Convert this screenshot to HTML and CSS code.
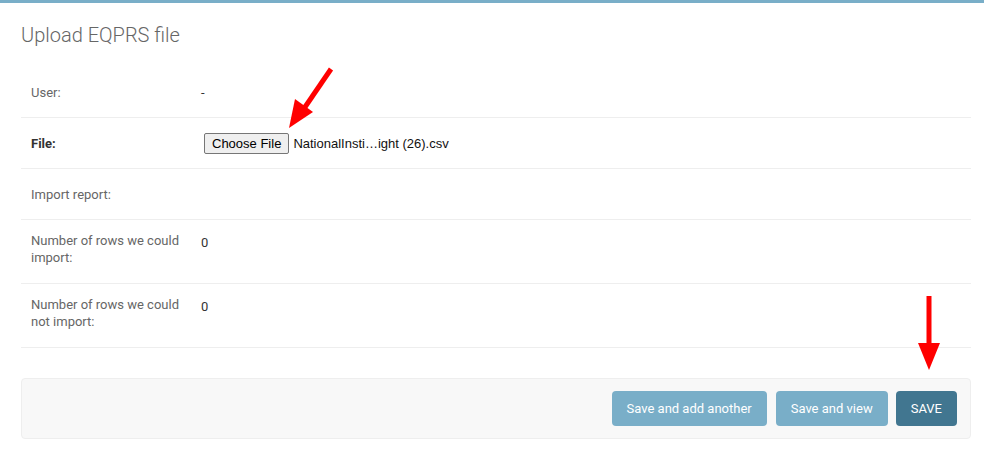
FILE: index.html
```html
<!DOCTYPE html>
<html>
<head>
<meta charset="utf-8">
<link rel="stylesheet" href="styles.css">
</head>
<body>
<div class="topbar"></div>
<div class="content">
  <h1 class="title">Upload EQPRS file</h1>
  <div class="fieldset">
    <div class="form-row">
      <div class="label">User:</div>
      <div class="value">-</div>
    </div>
    <div class="form-row">
      <div class="label label-strong">File:</div>
      <div class="value file-value">
        <span class="file-btn">Choose File</span>
        <span class="file-name">NationalInsti…ight (26).csv</span>
      </div>
    </div>
    <div class="form-row">
      <div class="label">Import report:</div>
      <div class="value"></div>
    </div>
    <div class="form-row form-row-tall">
      <div class="label">Number of rows we could import:</div>
      <div class="value">0</div>
    </div>
    <div class="form-row form-row-tall">
      <div class="label">Number of rows we could not import:</div>
      <div class="value">0</div>
    </div>
  </div>
  <div class="submit-row">
    <span class="btn btn-wide">Save and add another</span>
    <span class="btn">Save and view</span>
    <span class="btn btn-default">SAVE</span>
  </div>
</div>
<svg class="arrows" width="984" height="454" viewBox="0 0 984 454">
  <line x1="331" y1="69" x2="303" y2="110" stroke="#ff0000" stroke-width="5"/>
  <polygon points="289,128 295,99 313,112" fill="#ff0000"/>
  <line x1="929" y1="296" x2="929" y2="346" stroke="#ff0000" stroke-width="5"/>
  <polygon points="918,343 940,343 929,370" fill="#ff0000"/>
</svg>
</body>
</html>
```
FILE: styles.css
```css
html, body {
  margin: 0;
  padding: 0;
  background: #fff;
}
body {
  position: relative;
  font-family: Roboto, "Liberation Sans", sans-serif;
  font-size: 13px;
  color: #333;
  width: 984px;
  height: 454px;
  overflow: hidden;
}
.topbar {
  height: 3px;
  background: #79aec8;
}
.content {
  padding: 0 13px 0 21px;
}
.title {
  margin: 20px 0 20px 0;
  font-size: 20px;
  line-height: 24px;
  font-weight: 300;
  color: #666;
}
.fieldset {
  display: flex;
  flex-direction: column;
}
.form-row {
  display: flex;
  padding: 10px;
  height: 30px;
  border-bottom: 1px solid #eee;
}
.form-row-tall {
  height: 43px;
}
.label {
  width: 160px;
  flex-shrink: 0;
  padding: 7px 10px 0 0;
  line-height: 17px;
  color: #666;
}
.form-row-tall .label {
  padding-top: 2px;
}
.label-strong {
  font-weight: 700;
  color: #333;
}
.value {
  padding-top: 7px;
  line-height: 17px;
  color: #333;
}
.form-row-tall .value {
  padding-top: 4px;
}
.file-value {
  padding-top: 5px;
  display: flex;
  align-items: center;
  height: 21px;
  font-family: "Liberation Sans", Arial, sans-serif;
  font-size: 13px;
  color: #111;
}
.file-btn {
  box-sizing: border-box;
  height: 21px;
  margin-left: 3px;
  padding: 0 7px;
  line-height: 19px;
  background: #efefef;
  border: 1px solid #767676;
  border-radius: 2px;
  color: #000;
}
.file-name {
  margin-left: 4px;
}
.submit-row {
  margin-top: 30px;
  display: flex;
  justify-content: flex-end;
  gap: 8px;
  padding: 12px 13px 12px 12px;
  background: #f8f8f8;
  border: 1px solid #eee;
  border-radius: 4px;
}
.btn {
  display: block;
  padding: 10px 15px;
  line-height: 15px;
  background: #79aec8;
  color: #fff;
  border-radius: 4px;
  font-size: 13px;
}
.btn-wide {
  margin-right: 1px;
}
.btn-default {
  background: #417690;
}
.arrows {
  position: absolute;
  left: 0;
  top: 0;
  pointer-events: none;
}
```
